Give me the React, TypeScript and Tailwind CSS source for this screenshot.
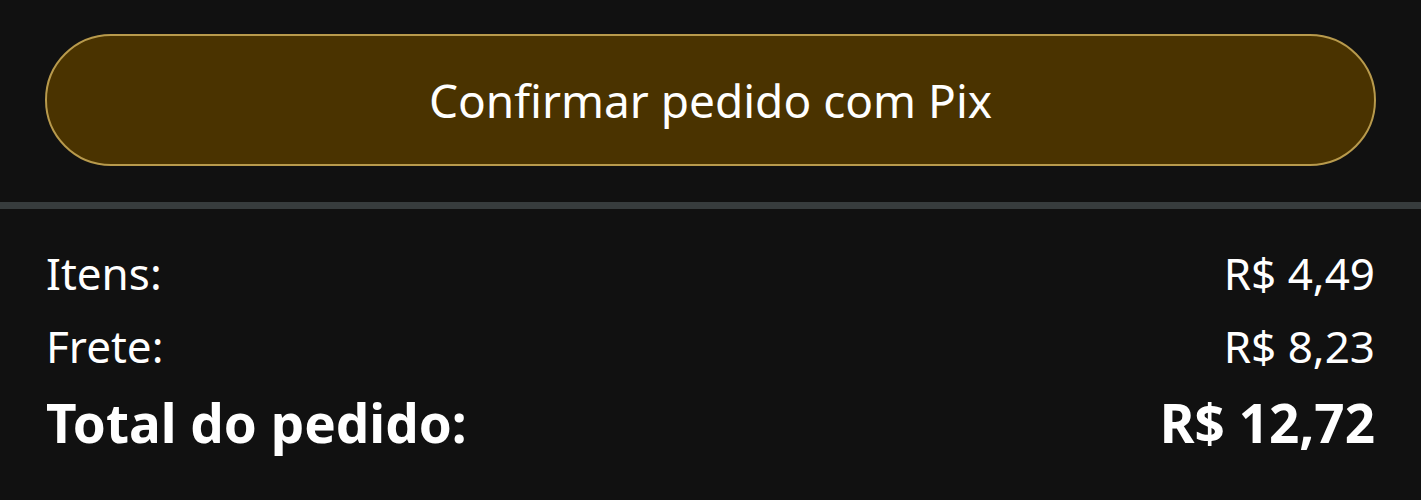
export default function App() {
  return (
    <div
      className="w-[1421px] h-[500px] bg-[#111111] text-white overflow-hidden"
      style={{ fontFamily: '"Noto Sans", "Open Sans", sans-serif' }}
    >
      <div className="pt-[34px] pb-[36px] px-[45px]">
        <button className="w-full h-[132px] rounded-full bg-[#4a3300] border-2 border-[#b89a4c] text-[46px] text-white flex items-center justify-center">
          Confirmar pedido com Pix
        </button>
      </div>
      <div className="h-[7px] bg-[#373c3d]" />
      <div className="px-[46px] pt-[28px] flex flex-col">
        <div className="flex justify-between text-[44px] leading-[73px]">
          <span>Itens:</span>
          <span>R$ 4,49</span>
        </div>
        <div className="flex justify-between text-[44px] leading-[73px]">
          <span>Frete:</span>
          <span>R$ 8,23</span>
        </div>
        <div className="flex justify-between text-[53px] leading-[80px] font-bold">
          <span>Total do pedido:</span>
          <span>R$ 12,72</span>
        </div>
      </div>
    </div>
  );
}
